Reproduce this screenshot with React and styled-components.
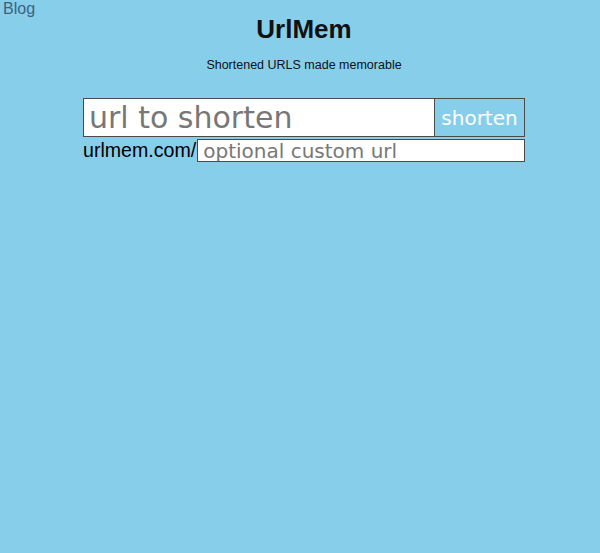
import React, { useState } from 'react';
import styled, { createGlobalStyle } from 'styled-components';

const GlobalStyle = createGlobalStyle`
  html, body {
    margin: 0;
    padding: 0;
    background: #87ceeb;
  }
  body {
    font-family: "Liberation Sans", Arial, sans-serif;
    min-height: 553px;
  }
`;

const Page = styled.div`
  padding-left: 8px;
  display: flex;
  flex-direction: column;
  align-items: center;
`;

const Nav = styled.nav`
  align-self: stretch;
  height: 14px;
  margin-left: -8px;
  padding-left: 3px;
`;

const NavLink = styled.a`
  font-size: 16px;
  color: #3b6380;
  text-decoration: none;
`;

const Title = styled.h1`
  margin: 0;
  font-size: 26px;
  font-weight: bold;
  color: #111;
`;

const Tagline = styled.p`
  margin: 13px 0 0;
  font-size: 12.5px;
  color: #111;
`;

const Form = styled.form`
  margin-top: 26px;
  width: 442px;
  display: flex;
  flex-direction: column;
  gap: 2px;
`;

const Row = styled.div`
  display: flex;
  align-items: ${p => (p.$stretch ? 'stretch' : 'center')};
  height: ${p => p.$height}px;
`;

const TextInput = styled.input`
  box-sizing: border-box;
  flex: 1;
  min-width: 0;
  height: 100%;
  margin: 0;
  padding: 0 4px 0 5px;
  border: 1px solid #4a4a4a;
  border-radius: 0;
  background: #fff;
  outline: none;
  font-family: "DejaVu Sans", sans-serif;
  font-size: ${p => p.$size}px;
  color: #222;
  &::placeholder {
    color: #777;
  }
`;

const Button = styled.button`
  box-sizing: border-box;
  width: 90px;
  margin: 0;
  padding: 0;
  border: 1px solid #4a4a4a;
  border-left: none;
  border-radius: 0;
  background: #87ceeb;
  color: #fff;
  font-family: "DejaVu Sans", sans-serif;
  font-size: 20px;
  cursor: pointer;
`;

const Prefix = styled.span`
  font-size: 19.6px;
  color: #000;
  white-space: nowrap;
  padding-right: 1px;
`;

export default function App() {
  const [url, setUrl] = useState('');
  const [custom, setCustom] = useState('');

  return (
    <>
      <GlobalStyle />
      <Page>
        <Nav>
          <NavLink href="#blog">Blog</NavLink>
        </Nav>
        <Title>UrlMem</Title>
        <Tagline>Shortened URLS made memorable</Tagline>
        <Form onSubmit={e => e.preventDefault()}>
          <Row $height={39} $stretch>
            <TextInput
              $size={30}
              placeholder="url to shorten"
              value={url}
              onChange={e => setUrl(e.target.value)}
            />
            <Button type="submit">shorten</Button>
          </Row>
          <Row $height={23}>
            <Prefix>urlmem.com/</Prefix>
            <TextInput
              $size={20}
              placeholder="optional custom url"
              value={custom}
              onChange={e => setCustom(e.target.value)}
            />
          </Row>
        </Form>
      </Page>
    </>
  );
}
